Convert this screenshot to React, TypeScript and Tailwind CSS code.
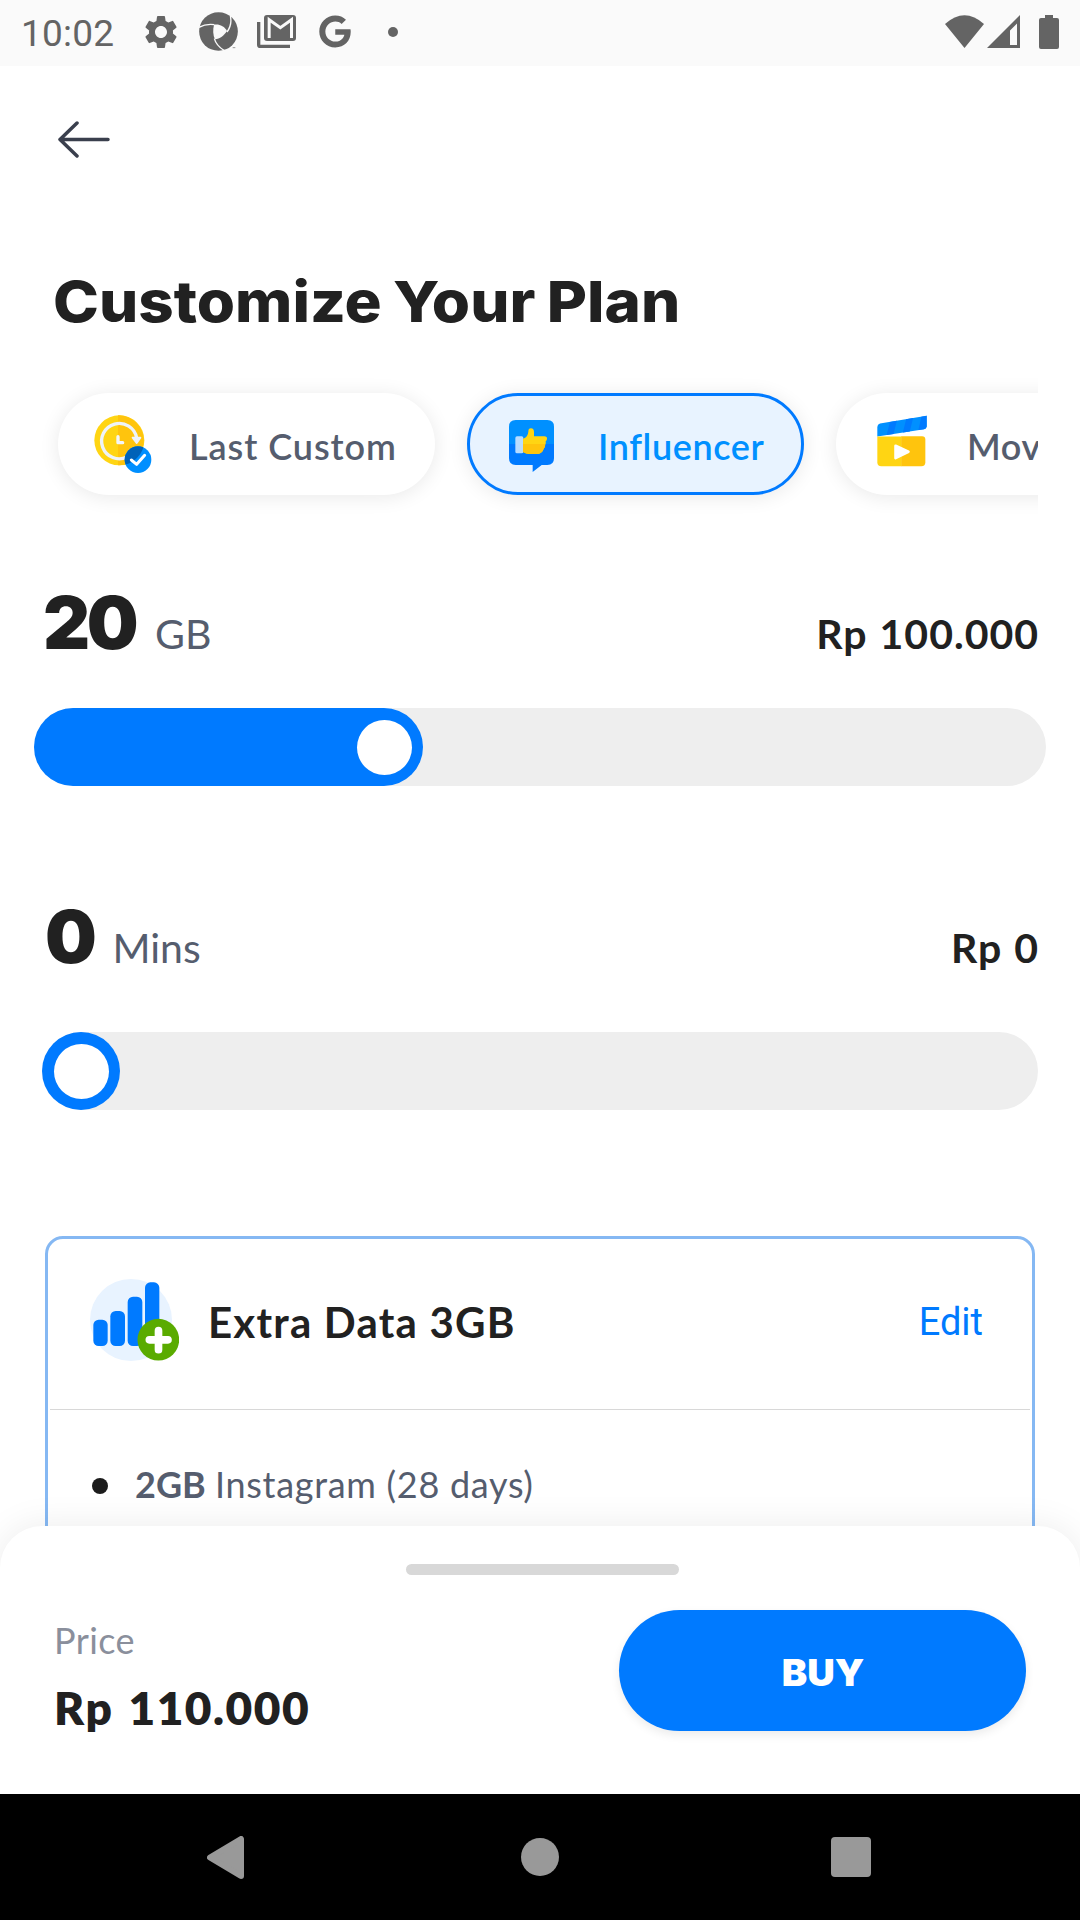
import React from 'react';
import { MdSettings } from 'react-icons/md';
import { FaGoogle } from 'react-icons/fa';

function StatusBar() {
  return (
    <div className="flex h-[66px] shrink-0 items-center bg-[#fafafa] pb-[3px] pl-[21px] pr-[21px] font-['Roboto',sans-serif] text-[#646464]">
      <span className="w-[120px] pt-[4px] text-[37px] leading-none tracking-[0.2px]">10:02</span>
      <MdSettings className="size-[40px]" />
      <svg className="ml-[18px] h-[39px] w-[39px]" viewBox="0 0 117 117">
        <circle cx="58.5" cy="58.5" r="58" fill="currentColor" />
        <path d="M45 38C60 35 76 42 84 57C76 70 62 81 48 82C42 70 41 54 45 38Z" fill="#fafafa" />
        <path d="M0 46C14 38 30 36 46 38M94 12C98 28 94 46 84 60M46 80C50 94 62 108 78 117" fill="none" stroke="#fafafa" strokeWidth="4" />
        <path d="M101 106h16v11h-16z" fill="#fafafa" />
        <path d="M101 107h8" stroke="currentColor" strokeWidth="2" />
      </svg>
      <svg className="ml-[19px] h-[33px] w-[39px]" viewBox="0 0 117 99">
        <path d="M0 21H10V89H99V99H10Q0 99 0 89Z" fill="currentColor" />
        <rect x="21" y="0" width="96" height="78" rx="9" fill="currentColor" />
        <path d="M36.500 69V14L70 38L103.500 14V69" fill="none" stroke="#fafafa" strokeWidth="9" />
      </svg>
      <FaGoogle className="ml-[23px] h-[33px] w-[32px]" />
      <span className="ml-[37px] size-[10px] rounded-full bg-[#646464]" />
      <svg className="ml-auto h-[33px] w-[39px]" viewBox="0 0 39 33">
        <path d="M0 9Q19.500 -8.500 39 9L19.500 33Z" fill="currentColor" />
      </svg>
      <svg className="ml-[3px] h-[33px] w-[33px]" viewBox="0 0 33 33">
        <path fillRule="evenodd" d="M33 0V33H0ZM30 8.500L23 15.500V30H30Z" fill="currentColor" />
      </svg>
      <svg className="ml-[19px] h-[34px] w-[20px]" viewBox="0 0 20 34">
        <path d="M6 0H14V3H18Q20 3 20 5V32Q20 34 18 34H2Q0 34 0 32V5Q0 3 2 3H6Z" fill="currentColor" />
      </svg>
    </div>
  );
}

function ClockIcon() {
  return (
    <svg className="h-[58px] w-[58px] shrink-0" viewBox="163 131 174 174">
      <defs>
        <clipPath id="badge">
          <circle cx="295" cy="265" r="40" />
        </clipPath>
      </defs>
      <circle cx="239" cy="207" r="75" fill="#ffd513" />
      <path d="M235 132A75 75 0 0 1 239 282H235Z" fill="#ffc40d" />
      <path d="M291 200A53 53 0 1 0 262 257" fill="none" stroke="#eef3f9" strokeWidth="10" />
      <path d="M279 199H302L291 215Z" fill="#eef3f9" stroke="#eef3f9" strokeWidth="6" strokeLinejoin="round" />
      <path d="M235 196V214H249" fill="none" stroke="#f3f6fa" strokeWidth="10" strokeLinecap="round" strokeLinejoin="round" />
      <circle cx="295" cy="265" r="40" fill="#008fff" />
      <circle cx="239" cy="207" r="75" fill="#0062b8" clipPath="url(#badge)" />
      <path d="M275 266L291 279L315 252" fill="none" stroke="#fff" strokeWidth="9" strokeLinecap="round" strokeLinejoin="round" />
    </svg>
  );
}

function ThumbIcon() {
  return (
    <svg className="mt-[3px] h-[52px] w-[45px] shrink-0" viewBox="177 149 135 156">
      <path d="M177 221V169Q177 149 197 149H292Q312 149 312 169V221Z" fill="#0090ff" />
      <path d="M177 221V264Q177 284 197 284H248V305L275 284H292Q312 284 312 264V221Z" fill="#007aff" />
      <rect x="196" y="198" width="24" height="51" rx="5" fill="#b9dcff" />
      <path d="M219 205Q234 200 235 184Q235 174 243 174Q252 174 252 186V198H283Q292 198 291 206Q290 212 287 213Q289 219 285 224Q286 231 281 235Q280 242 273 247Q268 251 260 251H238Q228 251 219 245Z" fill="#ffd513" />
      <path d="M219 221H286Q286 231 281 235Q280 242 273 247Q268 251 260 251H238Q228 251 219 245Z" fill="#ffc40d" />
    </svg>
  );
}

function MovieIcon() {
  return (
    <svg className="-mt-[6px] h-[52px] w-[50px] shrink-0" viewBox="200 135 151 155">
      <path d="M201 170Q201 162 209 160L350 136V168Q350 175 342 177L201 199Z" fill="#0090ff" />
      <path d="M239 155L260 151.500L250 191L229 194.500ZM288 146.500L309 143L299 183.500L278 187ZM334 139L350 136V168Q350 175 342 177L325 179.500Z" fill="#007aff" />
      <path d="M201 199H274V289H213Q201 289 201 277Z" fill="#ffd513" />
      <path d="M273 198H336Q346 198 346 208V277Q346 289 334 289H273Z" fill="#ffc40d" />
      <path d="M256 227L295 245L256 264Z" fill="#fff" stroke="#fff" strokeWidth="8" strokeLinejoin="round" />
    </svg>
  );
}

function DataIcon() {
  return (
    <svg className="-mt-[3px] h-[82px] w-[89px] shrink-0" viewBox="179 177 267 246">
      <circle cx="302" cy="300" r="123" fill="#e8f3ff" />
      <g fill="#007aff">
        <rect x="189" y="299" width="43" height="79" rx="16" />
        <rect x="240" y="273" width="44" height="105" rx="16" />
        <rect x="292" y="230" width="44" height="148" rx="16" />
        <rect x="344" y="187" width="43" height="191" rx="16" />
      </g>
      <circle cx="384" cy="359" r="62.500" fill="#5aab00" />
      <path d="M357 359.500H413M384.500 332V389" stroke="#fff" strokeWidth="23" strokeLinecap="round" />
    </svg>
  );
}

function Amount({ value, unit, price, className }: { value: string; unit: string; price: string; className: string }) {
  return (
    <div className={`flex h-[73px] items-baseline pr-[41px] ${className}`}>
      <span className="font-['Inter',sans-serif] text-[73px] font-black leading-none tracking-[-3.500px] text-[#212121]">{value}</span>
      <span className="text-[41px] leading-none text-[#555d6e]">{unit}</span>
      <span className="ml-auto text-[41px] font-bold leading-none tracking-[1px] text-[#212121] [word-spacing:1px]">{price}</span>
    </div>
  );
}

export default function App() {
  return (
    <div className="flex h-[1920px] w-[1080px] flex-col overflow-hidden bg-white font-['Lato',sans-serif]">
      <StatusBar />

      <main className="relative flex-1 overflow-hidden">
        <header className="h-[195px] pl-[58px] pt-[55px]">
          <svg className="h-[37px] w-[52px]" viewBox="0 0 52 37" fill="none" stroke="#3a3f4d" strokeWidth="3.500" strokeLinecap="round" strokeLinejoin="round">
            <path d="M50 18.500H2M19 2L2 18.500L19 35" />
          </svg>
        </header>

        <h1 className="ml-[53px] h-[80px] w-[600px] origin-left scale-x-[1.085] whitespace-nowrap font-['Inter',sans-serif] text-[57px] font-extrabold leading-[82px] text-[#212121] [word-spacing:-2px]">
          Customize Your Plan
        </h1>

        <div className="ml-[42px] mt-[34px] flex h-[140px] w-[996px] gap-[32px] overflow-hidden pl-[16px] pt-[18px] text-[36px] font-semibold leading-none text-[#555d6e]">
          <div className="flex h-[102px] w-[377px] shrink-0 items-center rounded-full bg-white pl-[36px] shadow-[0_2px_20px_rgba(0,0,0,0.09)]">
            <ClockIcon />
            <span className="ml-[37px] mt-[3px] tracking-[0.930px]">Last Custom</span>
          </div>
          <div className="flex h-[102px] w-[337px] shrink-0 items-center rounded-full border-[3px] border-[#007aff] bg-[#e8f3ff] pl-[39px] text-[#0090ff] shadow-[0_2px_20px_rgba(0,0,0,0.09)]">
            <ThumbIcon />
            <span className="ml-[44px] mt-[3px] tracking-[0.600px]">Influencer</span>
          </div>
          <div className="flex h-[102px] w-[300px] shrink-0 items-center rounded-full bg-white pl-[41px] shadow-[0_2px_20px_rgba(0,0,0,0.09)]">
            <MovieIcon />
            <span className="ml-[40px] mt-[3px] tracking-[0.600px]">Mov</span>
          </div>
        </div>

        <Amount value="20" unit="GB" price="Rp 100.000" className="mt-[71px] gap-[20px] pl-[43px]" />
        <div className="ml-[34px] mt-[49px] h-[78px] w-[1012px] rounded-full bg-[#eeeeee]">
          <div className="flex h-full w-[389px] items-center justify-end rounded-full bg-[#007aff] pr-[11px]">
            <span className="size-[55px] rounded-full bg-white" />
          </div>
        </div>

        <Amount value="0" unit="Mins" price="Rp 0" className="mt-[113px] gap-[19px] pl-[45px] pt-px" />
        <div className="ml-[42px] mt-[60px] h-[78px] w-[996px] rounded-full bg-[#eeeeee]">
          <div className="flex size-[78px] items-center justify-center rounded-full bg-[#007aff]">
            <span className="size-[55px] rounded-full bg-white" />
          </div>
        </div>

        <section className="mx-[45px] mt-[126px] h-[420px] rounded-[18px] border-[3px] border-[#85b8f3]">
          <div className="mx-[2px] flex h-[171px] items-center border-b border-[#d8d8d8] pb-[5px] pl-[40px] pr-[47px]">
            <DataIcon />
            <span className="ml-[29px] text-[42px] font-bold leading-none tracking-[1.200px] text-[#212121]">Extra Data 3GB</span>
            <span className="ml-auto font-['Roboto',sans-serif] text-[38px] leading-none text-[#007aff]">Edit</span>
          </div>
          <div className="mt-[53px] flex h-[40px] items-center pl-[44px] text-[36px] leading-none text-[#555d6e]">
            <span className="mt-[6px] size-[16px] rounded-full bg-[#1c1c1c]" />
            <span className="ml-[27px] mt-[1px] w-[80px] font-bold">2GB</span>
            <span className="mt-[1px] tracking-[0.700px]">Instagram (28 days)</span>
          </div>
        </section>

        <div className="absolute inset-x-0 bottom-0 h-[268px] rounded-t-[42px] bg-white pt-[38px] shadow-[0_0_36px_rgba(0,0,0,0.08)]">
          <div className="ml-[406px] h-[11px] w-[273px] rounded-full bg-[#d8d8d8]" />
          <div className="mt-[35px] flex pl-[54px] pr-[54px]">
            <div className="pt-[8px]">
              <div className="text-[36px] leading-[44px] tracking-[0.400px] text-[#8a8f9c]">Price</div>
              <div className="mt-[16px] text-[46px] font-extrabold leading-[60px] tracking-[1.500px] text-[#212121] [word-spacing:3px]">Rp 110.000</div>
            </div>
            <button className="ml-auto h-[121px] w-[407px] rounded-full bg-[#007aff] pl-[2px] pt-[3px] font-['Inter',sans-serif] text-[37px] font-black leading-none text-white shadow-[0_4px_10px_rgba(0,0,0,0.08)]">
              <span className="inline-block scale-x-[1.030]">BUY</span>
            </button>
          </div>
        </div>
      </main>

      <nav className="flex h-[126px] shrink-0 items-center bg-black pl-[207px]">
        <svg className="h-[43px] w-[37px]" viewBox="0 0 37 43">
          <path d="M3 21.500L34 3V40Z" fill="#999" stroke="#999" strokeWidth="6" strokeLinejoin="round" />
        </svg>
        <span className="ml-[277px] size-[38px] rounded-full bg-[#999999]" />
        <span className="ml-[272px] h-[40px] w-[40px] rounded-[4px] bg-[#999999]" />
      </nav>
    </div>
  );
}
